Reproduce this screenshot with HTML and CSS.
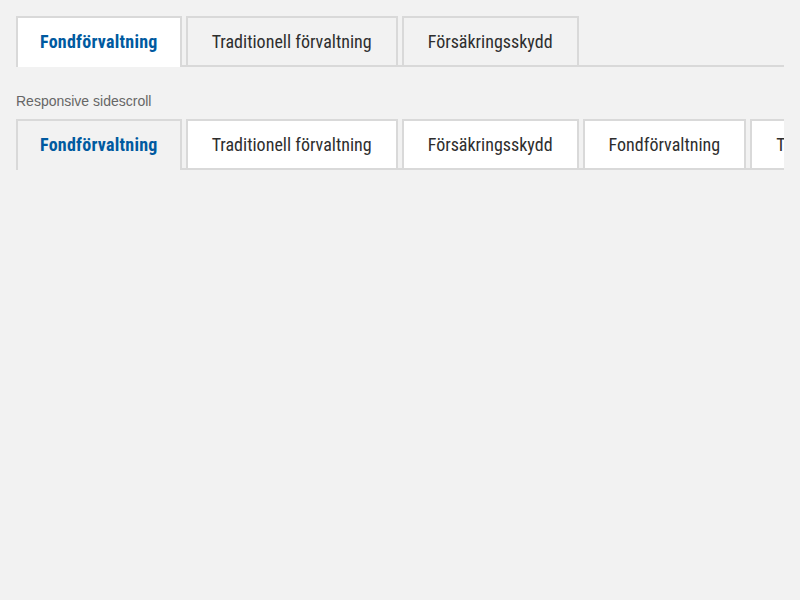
FILE: index.html
```html
<!DOCTYPE html>
<html lang="sv">
<head>
<meta charset="utf-8">
<title>Tabs</title>
<link rel="stylesheet" href="styles.css">
</head>
<body>
<div class="tabs">
  <a class="tab tab--active" href="#">Fondförvaltning</a>
  <a class="tab" href="#">Traditionell förvaltning</a>
  <a class="tab" href="#">Försäkringsskydd</a>
</div>

<p class="label">Responsive sidescroll</p>

<div class="scroller">
  <div class="tabs tabs--alt">
    <a class="tab tab--active" href="#">Fondförvaltning</a>
    <a class="tab" href="#">Traditionell förvaltning</a>
    <a class="tab" href="#">Försäkringsskydd</a>
    <a class="tab" href="#">Fondförvaltning</a>
    <a class="tab" href="#">Traditionell förvaltning</a>
    <a class="tab" href="#">Försäkringsskydd</a>
  </div>
</div>
</body>
</html>
```
FILE: styles.css
```css
html, body {
  background: #f2f2f2;
}
body {
  margin: 0;
  padding: 16px;
  font-family: "Roboto Condensed", "Liberation Sans Narrow", sans-serif;
}
.tabs {
  display: flex;
  gap: 4px;
  border-bottom: 2px solid #d9d9d9;
  align-items: flex-end;
}
.tab {
  flex: 0 0 auto;
  display: flex;
  align-items: center;
  justify-content: center;
  box-sizing: border-box;
  height: 49px;
  padding: 0 24px 1px;
  border: 2px solid #d9d9d9;
  border-bottom: 0;
  background: #f2f2f2;
  color: #2e2e2e;
  font-size: 18px;
  text-decoration: none;
  white-space: nowrap;
}
.tab--active {
  height: 51px;
  margin-bottom: -2px;
  padding: 0 22px 3px;
  background: #ffffff;
  color: #005aa0;
  font-weight: 700;
  letter-spacing: 0.25px;
}
.tabs--alt .tab {
  background: #ffffff;
}
.tabs--alt .tab--active {
  background: #f2f2f2;
}
.label {
  margin: 26px 0 10px;
  font-family: "Liberation Sans", Arial, sans-serif;
  font-size: 14px;
  line-height: 16px;
  color: #666666;
}
.scroller {
  overflow-x: auto;
  scrollbar-width: none;
}
.scroller::-webkit-scrollbar {
  display: none;
}
.scroller .tabs {
  width: max-content;
  min-width: 100%;
}
```
